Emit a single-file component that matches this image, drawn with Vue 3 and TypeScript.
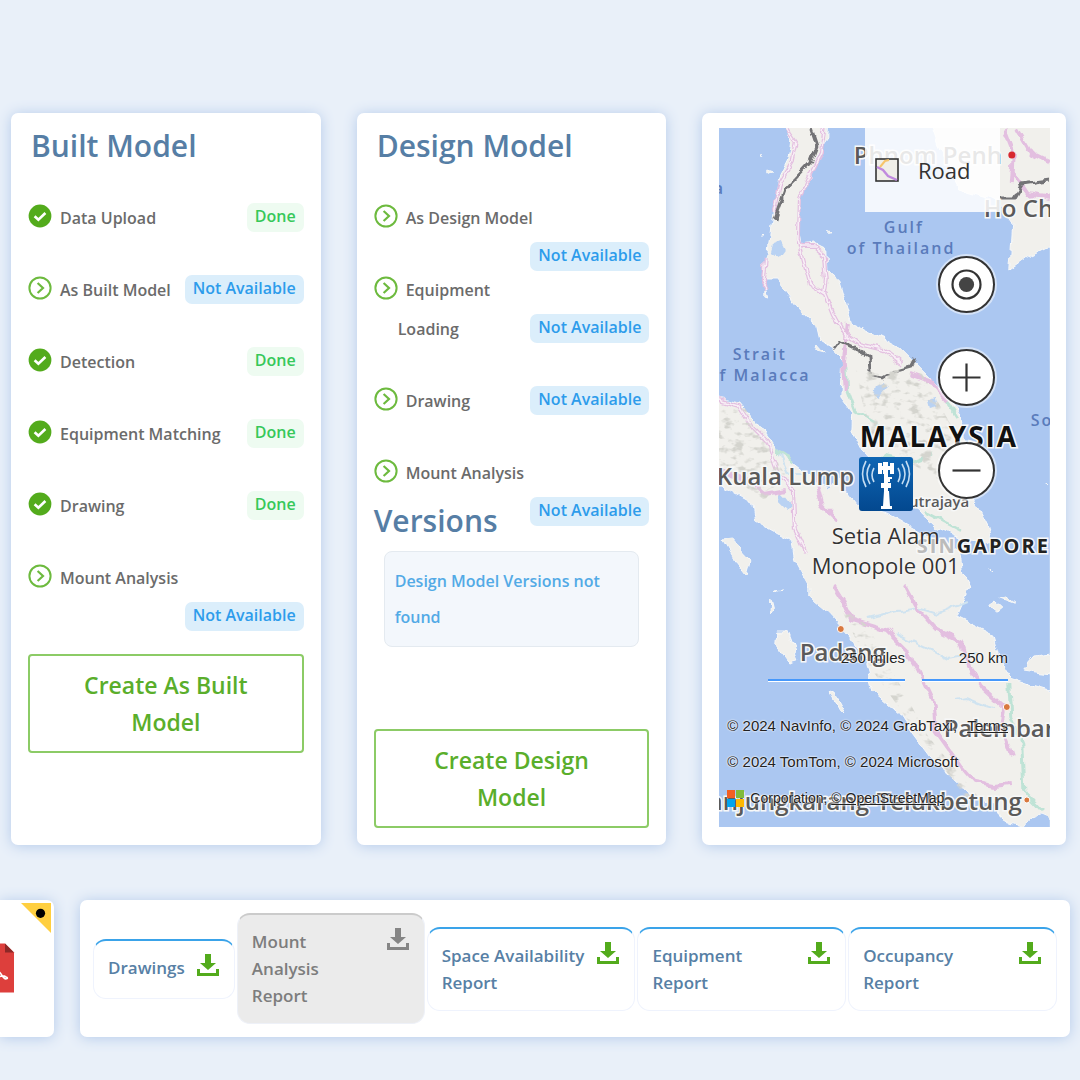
<script setup lang="ts">
interface Step {
  label: string
  rest?: string
  status: 'Done' | 'Not Available'
  stacked?: boolean
}

interface Report {
  name: string
  disabled?: boolean
}

interface PlaceLabel {
  text: string
  x: number
  y: number
  kind: string
}

const builtSteps: Step[] = [
  { label: 'Data Upload', status: 'Done' },
  { label: 'As Built Model', status: 'Not Available' },
  { label: 'Detection', status: 'Done' },
  { label: 'Equipment Matching', status: 'Done' },
  { label: 'Drawing', status: 'Done' },
  { label: 'Mount Analysis', status: 'Not Available', stacked: true },
]

const designSteps: Step[] = [
  { label: 'As Design Model', status: 'Not Available', stacked: true },
  { label: 'Equipment', rest: 'Loading', status: 'Not Available', stacked: true },
  { label: 'Drawing', status: 'Not Available' },
  { label: 'Mount Analysis', status: 'Not Available', stacked: true },
]

const models = [
  { id: 'built', title: 'Built Model', steps: builtSteps, action: 'Create As Built Model' },
  { id: 'design', title: 'Design Model', steps: designSteps, action: 'Create Design Model' },
]

const reports: Report[] = [
  { name: 'Drawings' },
  { name: 'Mount Analysis Report', disabled: true },
  { name: 'Space Availability Report' },
  { name: 'Equipment Report' },
  { name: 'Occupancy Report' },
]

const places: PlaceLabel[] = [
  { text: 'Phnom Penh', x: 854, y: 164, kind: 'city' },
  { text: 'Ho Chi Minh City', x: 984, y: 217, kind: 'city' },
  { text: 'Gulf', x: 884, y: 233, kind: 'sea' },
  { text: 'of Thailand', x: 847, y: 254, kind: 'sea' },
  { text: 'Strait', x: 733, y: 360, kind: 'sea' },
  { text: 'of Malacca', x: 708, y: 381, kind: 'sea' },
  { text: 'South China Sea', x: 1031, y: 426, kind: 'sea' },
  { text: 'a', x: 714, y: 194, kind: 'sea' },
  { text: 'MALAYSIA', x: 860, y: 447, kind: 'country' },
  { text: 'Kuala Lump', x: 717, y: 485, kind: 'city' },
  { text: 'Putrajaya', x: 900, y: 507, kind: 'town' },
  { text: 'Padang', x: 800, y: 661, kind: 'city' },
  { text: 'Palembang', x: 944, y: 737, kind: 'city' },
]
</script>

<template>
  <main class="page">
    <section class="models">
      <article v-for="m in models" :key="m.id" class="card model">
        <h2>{{ m.title }}</h2>
        <ul class="steps">
          <li v-for="s in m.steps" :key="s.label" class="step" :class="{ stacked: s.stacked, tall: s.rest }">
            <div class="head">
              <svg v-if="s.status === 'Done'" class="mark" viewBox="0 0 24 24" aria-hidden="true">
                <circle cx="12" cy="12" r="11.4" fill="#53ab1c" />
                <path d="M6.6 12.2l3.8 3.6 7-6.8" fill="none" stroke="#fff" stroke-width="2.6" />
              </svg>
              <svg v-else class="mark" viewBox="0 0 24 24" aria-hidden="true">
                <circle cx="12" cy="12" r="10.6" fill="none" stroke="#6dba3e" stroke-width="2" />
                <path d="M9.6 7l5.4 5-5.4 5" fill="none" stroke="#6dba3e" stroke-width="2.2" />
              </svg>
              <span>{{ s.label }}</span>
            </div>
            <div class="tail">
              <span v-if="s.rest" class="rest">{{ s.rest }}</span>
              <span class="badge" :class="s.status === 'Done' ? 'done' : 'missing'">{{ s.status }}</span>
            </div>
          </li>
        </ul>
        <template v-if="m.id === 'design'">
          <h2 class="versions">Versions</h2>
          <p class="empty">Design Model Versions not found</p>
        </template>
        <button type="button" class="create" :class="m.id">{{ m.action }}</button>
      </article>

      <article class="card map-card">
        <div class="map">
          <svg class="canvas" viewBox="719 128 331 699" preserveAspectRatio="xMidYMid slice" aria-label="Map of Malaysia">
            <defs>
              <filter id="coast" x="-5%" y="-5%" width="110%" height="110%">
                <feTurbulence type="fractalNoise" baseFrequency="0.08" numOctaves="2" seed="4" />
                <feDisplacementMap in="SourceGraphic" scale="9" xChannelSelector="R" yChannelSelector="G" />
                <feGaussianBlur stdDeviation="0.5" />
              </filter>
              <filter id="relief" x="0" y="0" width="100%" height="100%">
                <feTurbulence type="fractalNoise" baseFrequency="0.09 0.15" numOctaves="3" seed="9" />
                <feColorMatrix values="0 0 0 0 0.66  0 0 0 0 0.66  0 0 0 0 0.62  0 0 0 5 -2.6" />
                <feComposite in2="SourceGraphic" operator="in" />
              </filter>
            </defs>
            <rect x="719" y="128" width="331" height="699" fill="#abc7f1" />
            <g filter="url(#coast)">
              <g fill="#f1f0ec" stroke="#f7f8f8" stroke-width="1">
                <path d="M782 120l9 20-2 17-10 20-4 30-3 20-3 26-6 10 1 17 13 0 20 27 20 20 3 13 10 6 13 14-2 37 12 16-1 17 10 20 17 17 36 40 20 20 30 13 20 3 7-3-3-13-10-20-10-14 0-30-4-23-6-27-17-23-27-27-16-16-14-8-33-16-8-26-5-17-12-10-1-20-12-6-13 2-3-27 3-23 10-20 5-20 12-17 1-20z" />
                <path d="M710 396l30 7 20 24 17 23 23 17 30 23 8-11 22 28 27 6 13 7 33 20 27 13 3 20 7 14-7 16-6 14 36 18 7 25 10 17 23 8 27 8v140l-13-16-7-3-17 13-20-6-7-14-30-16-36-34-17-23-13-20-27-23-7-30-16-24-20-23-20-17v-10l-14-26-3-20-37-20-3-17-30-17z" />
                <path d="M930 120l10 30 20 40 28 8 12 6 13 19-3 47 18-13 32-16V120z" />
                <path d="M723 540l8-1 20 22-4 14-14-18zM778 632l9 0 11 28-8 2-13-18zM829 690l5 2 12 22-6-3zM1022 670l13-15 25-3v23l-25-3zM770 598l3 12-4 6zM990 606l8 6 5-4-9-8zM1000 598l14 5-8-6zM766 287l3 10-3-1zM775 591l8-1-7 2zM829 345l6 4-9-5zM828 229l3 5-3 0zM1045 484l2 2zM989 568l2 2zM768 170l6 2-6 3zM760 155l2 4zM762 235l3 1-4 0zM817 344l7 8-8-2z" />
              </g>
              <g fill="#b9d2f3">
                <path d="M774 245l8-3 4 8-6 8-8-6zM876 386l8-4 4 6-8 10-6-4zM928 400l8-2 2 8-8 2zM778 490l6 6 8 10-4 4-8-8z" />
              </g>
              <g fill="none" stroke="#cfe3f0" stroke-width="2">
                <path d="M868 618l24-6 26-4 20 6 30-12M896 634l30 14 20 10 30-4M956 700l10-2 20 8 8 2M778 450l10 24 14 0" />
              </g>
              <g fill="none" stroke="#bfe3d6" stroke-width="3">
                <path d="M846 366l2 24 8 22 24 14M938 388l18 28M925 512l34 18M776 450l18 12M1010 684l2 34 10 26 2 46 20 22M884 454l30 8 20-8" />
              </g>
              <g fill="none" stroke="#e3bfe0" stroke-width="4">
                <path d="M786 128l10 14-4 20-12 20-6 30M825 128l-4 24-12 24-10 24-1 40 4 14 8 30 16 10 8 20 12 22 12 8 26 6 18 14M800 247l14 0 10 8 2 26-2 12M848 324l-4 38 2 28M910 374l22 8 14 18M765 258l-2 24 4 8" />
                <path d="M719 400l20 6 14 22 14 14 10 28 16 20 2 40 10 22M719 470l30 10 16 14 22-4M815 474l8 32 14 14M834 586l10 16 8 18 34 10 20 20 12 20 16 34 2 28 24 34 14 16 20 4 18-2M905 586l12 22 20 22 24 12 8 24 14 22 22 20M1006 706l-4 20 10 30M1004 128l10 26-2 30M1012 170l16 24 22 4M1016 128l14 24 20 10" />
              </g>
              <g fill="none" stroke="#f8eff6" stroke-width="1.6">
                <path d="M786 128l10 14-4 20-12 20-6 30M825 128l-4 24-12 24-10 24-1 40 4 14 8 30 16 10 8 20 12 22 12 8 26 6 18 14M800 247l14 0 10 8 2 26-2 12M719 400l20 6 14 22 14 14 10 28 16 20 2 40 10 22M765 258l-2 24 4 8" />
              </g>
              <g fill="none" stroke="#737376" stroke-width="3">
                <path d="M811 128l6 18-6 16-26 28-10 28M833 348l6-8 20 10 10 6 2 20 12 2 14-8 14-4 4-8M1000 198l14 0 8-14 28-4" />
              </g>
            </g>
            <g filter="url(#relief)">
              <path d="M856 370l64 0 34 60-14 50-70-40zM719 408l26 0 40 66-20 26-46-30zM840 606l28 20 60 110 50 60-10 4-50-66-50-70z" fill="#000" />
            </g>
            <g fill="#d9793f" stroke="#fff" stroke-width="1">
              <circle cx="841" cy="629" r="3.5" />
              <circle cx="1007" cy="707" r="3.5" />
              <circle cx="1027" cy="800" r="3" />
            </g>
            <circle cx="1012" cy="155" r="3.5" fill="#d7282f" />
            <text v-for="p in places" :key="p.text" :x="p.x" :y="p.y" :class="p.kind">{{ p.text }}</text>
            <text x="1022" y="810" text-anchor="end" class="city">Tanjungkarang-Telukbetung</text>
            <text x="917" y="553" class="state"><tspan class="faint">SIN</tspan>GAPORE</text>
          </svg>

          <button type="button" class="style-picker">
            <svg viewBox="0 0 24 24" aria-hidden="true">
              <rect x="1" y="1" width="22" height="22" fill="#efeee8" stroke="#333" stroke-width="1.6" />
              <path d="M5 9l5-6 4-1" fill="none" stroke="#f6c46b" stroke-width="2" />
              <path d="M2 9l6 3 5 6 9 4" fill="none" stroke="#c08ade" stroke-width="2.4" />
            </svg>
            <span>Road</span>
          </button>

          <div class="controls">
            <button type="button" aria-label="Locate me">
              <svg viewBox="0 0 53 53"><circle cx="26.5" cy="26.5" r="14" fill="none" stroke="#333" stroke-width="2.2" /><circle cx="26.500" cy="26.500" r="7.600" fill="#444" /></svg>
            </button>
            <button type="button" aria-label="Zoom in">
              <svg viewBox="0 0 53 53"><path d="M12.500 26.500h28M26.500 12.500v28" stroke="#333" stroke-width="2.200" /></svg>
            </button>
            <button type="button" aria-label="Zoom out">
              <svg viewBox="0 0 53 53"><path d="M12.500 26.500h28" stroke="#333" stroke-width="2.200" /></svg>
            </button>
          </div>

          <div class="pin">
            <svg viewBox="0 0 54 54" aria-hidden="true">
              <defs>
                <linearGradient id="pin-fill" x1="0" y1="0" x2="0" y2="1">
                  <stop offset="0" stop-color="#0f66b4" />
                  <stop offset="1" stop-color="#03488f" />
                </linearGradient>
              </defs>
              <rect width="54" height="54" rx="3" fill="url(#pin-fill)" />
              <g fill="#fff">
                <path d="M19 6h4v11h-4zM24 5h5v12h-5zM31 6h4v11h-4zM19 9h16v4H19zM25 16h4v19h-4zM28 20h5v2h-2v3h-3zM22 26h10v5H22zM25 34h5l1 15h-7zM22 49h11v3H22z" />
              </g>
              <g fill="none" stroke="#c3dcf2" stroke-width="1.6">
                <path d="M15 11q-4 7 0 14M11 7q-6 10 0 20M7 4q-7 13 0 26M39 11q4 7 0 14M43 7q6 10 0 20M47 4q7 13 0 26" />
              </g>
            </svg>
            <span>Setia Alam<br />Monopole 001</span>
          </div>

          <div class="scale">
            <span class="miles">250 miles</span>
            <span class="km">250 km</span>
          </div>

          <div class="credits">
            <p>© 2024 NavInfo, © 2024 GrabTaxi, <a href="#terms" class="terms">Terms</a></p>
            <p>© 2024 TomTom, © 2024 Microsoft</p>
            <p class="corp">
              <svg viewBox="0 0 17 17" aria-hidden="true">
                <path d="M0 0h8v8H0z" fill="#f25f22" /><path d="M9 0h8v8H9z" fill="#80bb3b" />
                <path d="M0 9h8v8H0z" fill="#00a4ef" /><path d="M9 9h8v8H9z" fill="#ffb901" />
              </svg>
              <span>Corporation, <a href="#osm">© OpenStreetMap</a></span>
            </p>
          </div>
        </div>
      </article>
    </section>

    <section class="files">
      <article class="card pdf-card">
        <svg viewBox="0 0 54 137" aria-label="PDF document">
          <path d="M21 3h30v30z" fill="#ffcf40" />
          <circle cx="40.500" cy="13.300" r="4.600" fill="#000" />
          <path d="M-24 43.500H5l9 9V92.500h-38z" fill="#dd3f3c" />
          <path d="M5 43.500l9 9H5z" fill="#8d2827" />
          <path d="M-4 80C-2 76 3 75 6 77c3 1 0 3-2 1S1 73-2 71" fill="none" stroke="#fff" stroke-width="1.700" />
        </svg>
      </article>
      <article class="card reports">
        <button v-for="r in reports" :key="r.name" type="button" class="report" :disabled="r.disabled">
          <span>{{ r.name }}</span>
          <svg viewBox="0 0 22 22" aria-hidden="true">
            <path d="M8 0h6v9h5l-8 7-8-7h5zM0 15h3v4h16v-4h3v7H0z" fill="currentColor" />
          </svg>
        </button>
      </article>
    </section>
  </main>
</template>

<style>
body {
  margin: 0;
  background: #e9f0f9;
}
</style>

<style scoped>
.page {
  box-sizing: border-box;
  min-height: 100vh;
  padding: 113px 0 43px;
  overflow: hidden;
  background: #e9f0f9;
  color: #6b6b6b;
  font-family: "Open Sans", "Noto Sans", sans-serif;
  font-size: 16px;
  font-weight: 600;
}

button {
  font: inherit;
  cursor: pointer;
}

.card {
  box-sizing: border-box;
  background: #fff;
  border-radius: 7px;
  box-shadow: 0 1px 14px #b4caea;
}

.models {
  display: grid;
  grid-template-columns: 310fr 310fr 364fr;
  gap: 36px;
  padding: 0 14px 0 11px;
}

.model {
  padding: 11px 17px 17px;
}

h2 {
  margin: 0 3px 31px;
  color: #567ea5;
  font-size: 30px;
  font-weight: 600;
  line-height: 44px;
}

.steps {
  margin: 0;
  padding: 0;
  list-style: none;
}

.step {
  display: flex;
  justify-content: space-between;
  min-height: 72px;
  line-height: 39px;
  white-space: nowrap;
}

.step.stacked {
  flex-direction: column;
  justify-content: flex-start;
}

.step.tall {
  min-height: 111px;
}

.head {
  display: flex;
  gap: 8px;
  height: 39px;
}

.mark {
  width: 24px;
  height: 24px;
  margin-top: 5px;
}

.tail {
  display: flex;
  align-items: flex-start;
  justify-content: flex-end;
}

.rest {
  margin: 0 auto 0 24px;
}

.badge {
  margin-top: 4px;
  padding: 0 8px 2px;
  border-radius: 7px;
  line-height: 27px;
}

.done {
  background: #eefbf1;
  color: #36c85a;
}

.missing {
  background: #dbeefb;
  color: #2d9ceb;
}

.versions {
  margin: -27px 0 8px;
}

.empty {
  margin: 0 10px 82px;
  padding: 11px 10px;
  border: 1px solid #e4eaf0;
  border-radius: 8px;
  background: #f3f7fc;
  color: #52aae6;
  line-height: 36px;
}

.create {
  display: block;
  width: 100%;
  padding: 11px 50px 10px;
  border: 2px solid #8ccb66;
  border-radius: 4px;
  background: #fff;
  color: #5aae2b;
  font-size: 23px;
  line-height: 37px;
}

.create.built {
  margin-top: 23px;
}

.map-card {
  padding: 15px 16px 18px 17px;
}

.map {
  position: relative;
  height: 100%;
  overflow: hidden;
  color: #333;
}

.canvas {
  position: absolute;
  width: 100%;
  height: 100%;
}

.canvas text {
  fill: #5a5a5a;
  stroke: #f7f8f8;
  stroke-width: 3px;
  paint-order: stroke;
}

.canvas .city {
  font-size: 24px;
}

.canvas .town {
  font-size: 15px;
}

.canvas .sea {
  fill: #5a7bbb;
  stroke: none;
  font-size: 16px;
  letter-spacing: 2px;
}

.canvas .country {
  fill: #111;
  font-size: 28px;
  font-weight: 700;
  letter-spacing: 2px;
}

.canvas .state {
  fill: #222;
  font-size: 20px;
  font-weight: 700;
  letter-spacing: 2px;
}

.canvas .faint {
  fill: #bbb;
}

.style-picker {
  position: absolute;
  top: 0;
  right: 50px;
  display: flex;
  gap: 19px;
  align-items: center;
  width: 135px;
  height: 84px;
  padding: 0 10px;
  border: 0;
  background: rgba(255, 255, 255, 0.86);
  color: #333;
  font-size: 22px;
  font-weight: 500;
}

.style-picker svg {
  width: 24px;
  height: 24px;
}

.controls {
  position: absolute;
  top: 128px;
  right: 55px;
  display: grid;
  gap: 36px;
}

.controls button {
  width: 57px;
  height: 57px;
  padding: 0;
  border: 2px solid #333;
  border-radius: 50%;
  background: #fff;
  box-shadow: 0 0 0 2px rgba(255, 255, 255, 0.5);
}

.controls svg {
  display: block;
}

.pin {
  position: absolute;
  top: 329px;
  left: 50%;
  display: grid;
  justify-items: center;
  width: 200px;
  margin-left: -99px;
  font-size: 22px;
  font-weight: 500;
  line-height: 30px;
  text-align: center;
  text-shadow: 0 0 2px #fff, 0 0 2px #fff;
}

.pin svg {
  width: 54px;
  height: 54px;
  margin-bottom: 9px;
}

.scale,
.credits {
  position: absolute;
  font-family: "Liberation Sans", Arial, sans-serif;
  font-size: 15px;
  font-weight: 400;
  color: #222;
  text-shadow: 0 0 2px #fff, 0 0 2px #fff;
}

.scale {
  right: 42px;
  bottom: 146px;
  display: flex;
  gap: 17px;
  text-align: right;
  line-height: 42px;
}

.scale span {
  border-bottom: 2px solid #4698fb;
  box-shadow: 0 1px 0 #fff;
}

.miles {
  width: 137px;
}

.km {
  width: 86px;
}

.credits {
  right: 42px;
  bottom: 11px;
  left: 8px;
  line-height: 36px;
  white-space: nowrap;
}

.credits p {
  display: flex;
  margin: 0;
}

.credits a {
  color: inherit;
}

.terms {
  margin-left: auto;
}

.corp {
  gap: 6px;
  align-items: center;
}

.corp svg {
  width: 17px;
  height: 17px;
}

.corp span {
  font-size: 14px;
}

.files {
  display: grid;
  grid-template-columns: 54px 1fr;
  gap: 26px;
  margin-top: 55px;
  padding-right: 10px;
}

.pdf-card {
  border-radius: 0 7px 7px 0;
}

.pdf-card svg {
  display: block;
  width: 54px;
  height: 137px;
}

.reports {
  display: grid;
  grid-template-columns: 142fr 188fr 209fr 209fr 209fr;
  gap: 2px;
  align-items: center;
  padding: 12px 13px;
}

.report {
  display: flex;
  gap: 12px;
  align-items: flex-start;
  justify-content: space-between;
  min-height: 60px;
  padding: 13px 15px 14px 14px;
  border: 1px solid #eff3fd;
  border-top: 2px solid #3aa3e9;
  border-radius: 13px;
  background: #fff;
  color: #5780a5;
  font-size: 17px;
  line-height: 27px;
  text-align: left;
}

.report svg {
  flex: none;
  width: 22px;
  height: 22px;
  color: #53ab1c;
}

.report:disabled {
  border-color: #eef1f8;
  border-top-color: #cbcbcb;
  background: #ebebeb;
  color: #7d7d7d;
  cursor: default;
}

.report:disabled span {
  max-width: 90px;
}

.report:disabled svg {
  color: #858585;
}
</style>
